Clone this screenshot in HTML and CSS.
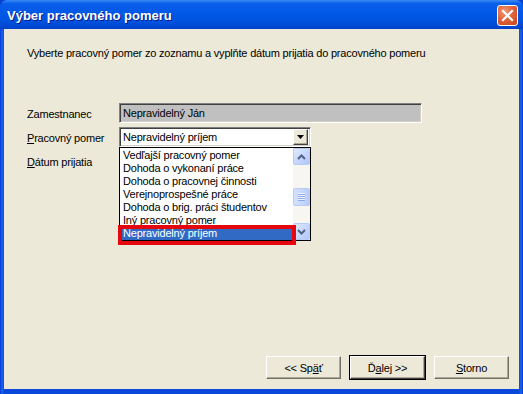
FILE: index.html
```html
<!DOCTYPE html>
<html lang="sk">
<head>
  <meta charset="UTF-8">
  <title>Výber pracovného pomeru</title>
  <link rel="stylesheet" href="styles.css">
</head>
<body>
  <div class="window">
    <!-- Title bar -->
    <div class="titlebar">
      <span class="title">Výber pracovného pomeru</span>
      <span class="close-btn">
        <svg width="13" height="13" viewBox="0 0 13 13">
          <path d="M2 2 L11 11 M11 2 L2 11" stroke="#fff" stroke-width="2.2" stroke-linecap="square"/>
        </svg>
      </span>
    </div>

    <div class="frame">
      <div class="content">
        <p class="intro">Vyberte pracovný pomer zo zoznamu a vyplňte dátum prijatia do pracovného pomeru</p>

        <div class="form">
          <div class="row">
            <span class="label">Zamestnanec</span>
            <div class="field readonly">Nepravidelný Ján</div>
          </div>
          <div class="row">
            <span class="label"><u>P</u>racovný pomer</span>
            <div class="combo">
              <span class="combo-value">Nepravidelný príjem</span>
              <span class="combo-drop">
                <svg width="7" height="4" viewBox="0 0 7 4"><path d="M0 0 H7 L3.5 4 Z" fill="#000"/></svg>
              </span>

              <!-- open dropdown list -->
              <div class="listbox">
                <ul class="items">
                  <li>Vedľajší pracovný pomer</li>
                  <li>Dohoda o vykonaní práce</li>
                  <li>Dohoda o pracovnej činnosti</li>
                  <li>Verejnoprospešné práce</li>
                  <li>Dohoda o brig. práci študentov</li>
                  <li>Iný pracovný pomer</li>
                  <li class="selected">Nepravidelný príjem</li>
                </ul>
                <div class="scrollbar">
                  <span class="sb-btn">
                    <svg width="9" height="6" viewBox="0 0 9 6"><path d="M1 5 L4.5 1.5 L8 5" fill="none" stroke="#4d6185" stroke-width="2"/></svg>
                  </span>
                  <div class="sb-track">
                    <span class="sb-thumb">
                      <i></i><i></i><i></i><i></i>
                    </span>
                  </div>
                  <span class="sb-btn">
                    <svg width="9" height="6" viewBox="0 0 9 6"><path d="M1 1 L4.5 4.5 L8 1" fill="none" stroke="#4d6185" stroke-width="2"/></svg>
                  </span>
                </div>
                <div class="mark"></div>
              </div>
            </div>
          </div>
          <div class="row">
            <span class="label"><u>D</u>átum prijatia</span>
          </div>
        </div>

        <div class="buttons">
          <button class="btn">&lt;&lt; Sp<u>ä</u>ť</button>
          <button class="btn default">Ď<u>a</u>lej &gt;&gt;</button>
          <button class="btn"><u>S</u>torno</button>
        </div>
      </div>
    </div>
  </div>
</body>
</html>
```

FILE: styles.css
```css
:root {
  --face: #ece9d8;
  --select: #316ac5;
  --ui-font: "Liberation Sans", "DejaVu Sans Condensed", sans-serif;
}
* { margin: 0; padding: 0; box-sizing: border-box; }
body {
  width: 523px;
  height: 394px;
  overflow: hidden;
  background: #fff;
  font-family: var(--ui-font);
  font-size: 11px;
  letter-spacing: -0.2px;
  color: #000;
}
.window {
  width: 523px;
  height: 394px;
  display: flex;
  flex-direction: column;
  background: #0a3fd0;
}
/* Title bar */
.titlebar {
  height: 29px;
  flex: none;
  display: flex;
  align-items: center;
  justify-content: space-between;
  padding: 0 5px 0 7px;
  border-radius: 7px 7px 0 0;
  background: linear-gradient(180deg, #3b8cf5 0%, #0a5fea 12%, #0058e6 45%, #0053e0 70%, #0049d4 90%, #0040c6 100%);
}
.title {
  color: #fff;
  font-family: "Liberation Sans", sans-serif;
  font-weight: 700;
  font-size: 13px;
  letter-spacing: 0;
  text-shadow: 1px 1px 0 #0a1a8a;
  padding-top: 1px;
}
.close-btn {
  width: 21px;
  height: 21px;
  display: flex;
  align-items: center;
  justify-content: center;
  border: 1px solid #fff;
  border-radius: 3px;
  background: radial-gradient(circle at 35% 30%, #f09a7c 0%, #e2643c 45%, #c94318 100%);
  margin-top: 1px;
}
/* Frame */
.frame {
  flex: 1;
  display: flex;
  padding: 0 4px 5px 4px;
  background: linear-gradient(90deg, #0831d9 0, #166aee 2px, #0a48dc 4px, #0a48dc calc(100% - 4px), #166aee calc(100% - 2px), #0831d9 100%);
}
.content {
  flex: 1;
  display: flex;
  flex-direction: column;
  background: var(--face);
  padding: 18px 10px 10px 23px;
}
.intro {
  line-height: 13px;
  margin-bottom: 43px;
}
/* Form */
.form {
  display: flex;
  flex-direction: column;
  gap: 4px;
}
.row {
  display: flex;
  align-items: center;
  height: 20px;
}
.label {
  width: 92px;
  flex: none;
  padding-top: 1px;
}
.field, .combo {
  height: 20px;
  display: flex;
  align-items: center;
  padding-left: 3px;
  border: 1px solid;
  border-color: #808080 #fff #fff #808080;
  box-shadow: inset 1px 1px 0 #404040, inset -1px -1px 0 #d4d0c8;
}
.field.readonly {
  width: 303px;
  background: #c0c0c0;
}
.combo {
  width: 192px;
  background: #fff;
  position: relative;
  padding-right: 2px;
  justify-content: space-between;
}
.combo-drop {
  width: 15px;
  height: 16px;
  display: flex;
  align-items: center;
  justify-content: center;
  background: var(--face);
  border: 1px solid;
  border-color: #fff #404040 #404040 #fff;
  box-shadow: inset -1px -1px 0 #aca899;
}
/* Dropdown list */
.listbox {
  position: absolute;
  top: 19px;
  left: -1px;
  width: 192px;
  height: 94px;
  display: flex;
  background: #fff;
  border: 1px solid #000;
  z-index: 5;
}
.items {
  list-style: none;
  flex: 1;
  padding: 1px 1px 0 1px;
  overflow: hidden;
}
.items li {
  height: 13px;
  line-height: 13px;
  padding-left: 2px;
  white-space: nowrap;
}
.items li.selected {
  background: var(--select);
  color: #fff;
}
.scrollbar {
  width: 17px;
  flex: none;
  display: flex;
  flex-direction: column;
  background: #f7f6f1;
}
.sb-btn {
  height: 17px;
  flex: none;
  display: flex;
  align-items: center;
  justify-content: center;
  border: 1px solid #b7cbf6;
  border-radius: 2px;
  background: linear-gradient(135deg, #e0eafd 0%, #c3d4fc 60%, #b2c6f7 100%);
}
.sb-track {
  flex: 1;
  display: flex;
  flex-direction: column;
  justify-content: center;
  padding-top: 5px;
}
.sb-thumb {
  height: 18px;
  display: flex;
  flex-direction: column;
  align-items: center;
  justify-content: center;
  gap: 1px;
  border: 1px solid #b7cbf6;
  border-radius: 2px;
  background: linear-gradient(90deg, #d3e0fd 0%, #c6d6fc 60%, #b8cbf8 100%);
}
.sb-thumb i {
  width: 7px;
  height: 1px;
  background: #eef3fe;
  box-shadow: 0 1px 0 #8fa9e6;
}
.mark {
  position: absolute;
  left: -2px;
  top: 77px;
  width: 178px;
  height: 20px;
  border: 4px solid #e4070d;
  pointer-events: none;
}
/* Buttons */
.buttons {
  margin-top: auto;
  display: flex;
  justify-content: flex-end;
  gap: 9px;
}
.btn {
  width: 75px;
  height: 23px;
  font-family: var(--ui-font);
  font-size: 11px;
  letter-spacing: -0.2px;
  background: var(--face);
  border: 1px solid;
  border-color: #fff #716f64 #716f64 #fff;
  box-shadow: inset -1px -1px 0 #aca899;
}
.btn.default {
  outline: 1px solid #000;
  outline-offset: 0;
  border-color: #fff #404040 #404040 #fff;
}
```
